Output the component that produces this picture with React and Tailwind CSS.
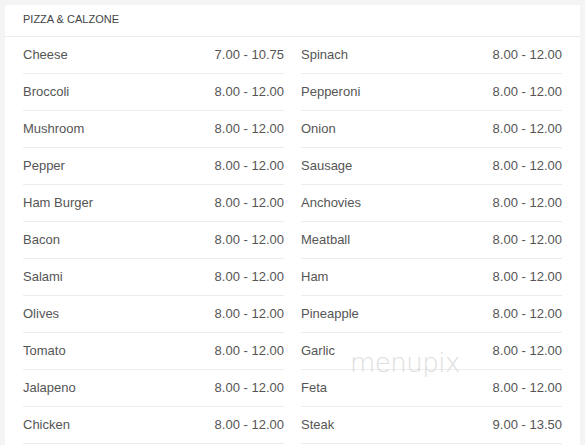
const left = [
  ['Cheese', '7.00 - 10.75'],
  ['Broccoli', '8.00 - 12.00'],
  ['Mushroom', '8.00 - 12.00'],
  ['Pepper', '8.00 - 12.00'],
  ['Ham Burger', '8.00 - 12.00'],
  ['Bacon', '8.00 - 12.00'],
  ['Salami', '8.00 - 12.00'],
  ['Olives', '8.00 - 12.00'],
  ['Tomato', '8.00 - 12.00'],
  ['Jalapeno', '8.00 - 12.00'],
  ['Chicken', '8.00 - 12.00'],
];

const right = [
  ['Spinach', '8.00 - 12.00'],
  ['Pepperoni', '8.00 - 12.00'],
  ['Onion', '8.00 - 12.00'],
  ['Sausage', '8.00 - 12.00'],
  ['Anchovies', '8.00 - 12.00'],
  ['Meatball', '8.00 - 12.00'],
  ['Ham', '8.00 - 12.00'],
  ['Pineapple', '8.00 - 12.00'],
  ['Garlic', '8.00 - 12.00'],
  ['Feta', '8.00 - 12.00'],
  ['Steak', '9.00 - 13.50'],
];

const Column = ({ items }) => (
  <div className="flex flex-col">
    {items.map(([name, price]) => (
      <div key={name} className="flex h-[37px] items-center justify-between border-b border-[#ececec]">
        <span>{name}</span>
        <span>{price}</span>
      </div>
    ))}
  </div>
);

export default function App() {
  return (
    <div className="h-[445px] overflow-hidden bg-[#f4f4f4] pt-[5px] pl-[5px] pr-[5px] font-['Liberation_Sans',Arial,sans-serif]">
      <div className="relative h-[460px] bg-white">
        <div className="flex h-[32px] items-end border-b border-[#ececec] px-[18px] pb-[9px] text-[11px] text-[#444]">
          PIZZA &amp; CALZONE
        </div>
        <div className="grid grid-cols-2 gap-x-[17px] px-[18px] text-[13px] text-[#555]">
          <Column items={left} />
          <Column items={right} />
        </div>
        {/* watermark */}
        <div className="absolute left-[345px] top-[339px] text-[26px] font-extralight tracking-[-0.5px] text-[#dedede] font-['DejaVu_Sans',sans-serif] select-none">
          menupix
        </div>
      </div>
    </div>
  );
}
